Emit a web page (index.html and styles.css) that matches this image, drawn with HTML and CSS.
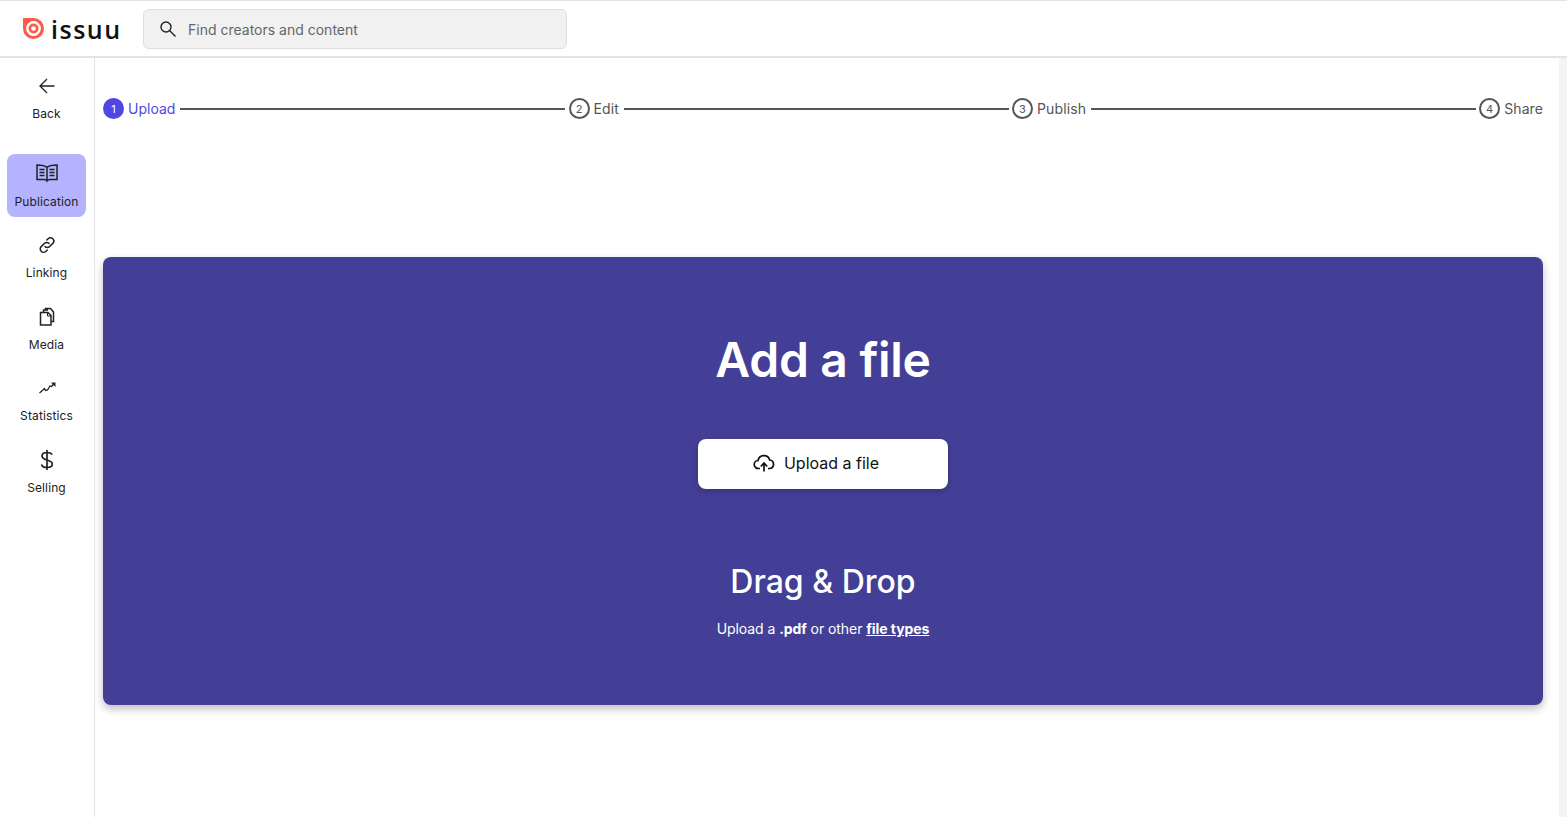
FILE: index.html
```html
<!DOCTYPE html>
<html lang="en">
<head>
<meta charset="utf-8">
<title>Upload a file</title>
<link rel="stylesheet" href="styles.css">
</head>
<body>
<header class="topbar">
  <a class="logo">
    <svg class="logo-mark" width="22" height="21" viewBox="0 0 22 21"><path d="M0 0h10.500a10.500 10.500 0 0 1 0 21a10.500 10.500 0 0 1-10.500-10.500z" fill="#ff5a47"/><circle cx="10.500" cy="10.500" r="6.200" fill="none" stroke="#fff" stroke-width="2.400"/><circle cx="10.500" cy="10.500" r="2.300" fill="#fff"/></svg>
    <span class="logo-text">issuu</span>
  </a>
  <div class="search">
    <svg width="18" height="18" viewBox="0 0 18 18" fill="none" stroke="#222" stroke-width="1.4"><circle cx="7" cy="7" r="5"/><path d="M10.800 10.800 16.500 16.500"/></svg>
    <span class="search-text">Find creators and content</span>
  </div>
</header>
<div class="shell">
  <nav class="sidebar">
    <a class="nav-item back">
      <svg viewBox="0 0 24 24" fill="none" stroke="#222" stroke-width="1.300"><path d="M19.500 12H5.500M12 5 5 12l7 7"/></svg>
      <span>Back</span>
    </a>
    <a class="nav-item active">
      <svg viewBox="0 0 24 24" fill="none" stroke="#222" stroke-width="1.500"><path d="M12 6.500C10.500 5 8 4 2 4v14.500h7c1.500 0 2.500.5 3 1.500.5-1 1.500-1.500 3-1.500h7V4c-6 0-8.500 1-10 2.500zM12 6.500v13"/><path d="M4.500 8.500h5M4.500 11.500h5M4.500 14.500h5M14.500 8.500h5M14.500 11.500h5M14.500 14.500h5" stroke-width="1.300"/></svg>
      <span>Publication</span>
    </a>
    <a class="nav-item">
      <svg viewBox="0 0 24 24" fill="none" stroke="#222" stroke-width="1.500" stroke-linecap="round"><path d="M10 13.500a3.300 3.300 0 0 0 4.700 0l3.100-3.100a3.300 3.300 0 0 0-4.700-4.700l-1.300 1.300"/><path d="M14 10.500a3.300 3.300 0 0 0-4.700 0l-3.100 3.100a3.300 3.300 0 0 0 4.700 4.700l1.300-1.300"/></svg>
      <span>Linking</span>
    </a>
    <a class="nav-item">
      <svg viewBox="0 0 24 24" fill="none" stroke="#222" stroke-width="1.500"><path d="M5.500 7.500h7.500l3 3v9.500H5.500z"/><path d="M8.500 7.500V5h4.500M10.500 5V3.500h5l3 3.500v9.500H16"/><path d="M12.500 7.500v3.500H16" stroke-width="1"/></svg>
      <span>Media</span>
    </a>
    <a class="nav-item">
      <svg viewBox="0 0 24 24" fill="none" stroke="#222" stroke-width="1.300"><path d="M4.500 17l5-4.500 1 2 2-.5 2.500-4 1.500.5 2-2.500"/><path d="M16 6.500h4.500V11z" fill="#222" stroke="none"/></svg>
      <span>Statistics</span>
    </a>
    <a class="nav-item">
      <svg viewBox="0 0 24 24" fill="none" stroke="#222" stroke-width="1.700"><path d="M12 2v20M17 6.800C16.500 5 14.500 4.500 12 4.500c-3 0-5 1.300-5 3.500 0 2.400 2.200 3.200 5 4 2.800.8 5.300 1.500 5.300 4 0 2.300-2.300 3.500-5.300 3.500-3 0-5-.8-5.500-3"/></svg>
      <span>Selling</span>
    </a>
  </nav>
  <main class="content">
    <ol class="stepper">
      <li class="step current"><span class="step-num">1</span><span>Upload</span></li>
      <li class="step-line"></li>
      <li class="step"><span class="step-num">2</span><span>Edit</span></li>
      <li class="step-line"></li>
      <li class="step"><span class="step-num">3</span><span>Publish</span></li>
      <li class="step-line"></li>
      <li class="step"><span class="step-num">4</span><span>Share</span></li>
    </ol>
    <section class="dropzone">
      <h1>Add a file</h1>
      <button class="upload-btn" type="button">
        <svg width="22" height="22" viewBox="0 0 22 22" fill="none" stroke="#111" stroke-width="1.700"><path d="M7 16.500H5.500a4 4 0 0 1-.5-8 6 6 0 0 1 11.700-.5 4.300 4.300 0 0 1 .3 8.500H15"/><path d="M11 19.500v-8M7.800 14.500 11 11l3.200 3.500"/></svg>
        <span>Upload a file</span>
      </button>
      <h2>Drag &amp; Drop</h2>
      <p>Upload a <b>.pdf</b> or other <a class="types"><b>file types</b></a></p>
    </section>
  </main>
  <div class="scrollbar"></div>
</div>
</body>
</html>
```
FILE: styles.css
```css
* { box-sizing: border-box; }
html, body { margin: 0; height: 100%; overflow: hidden; }
body { font-family: Inter, "Liberation Sans", sans-serif; background: #fff; color: #222; height: 817px; display: flex; flex-direction: column; }
.topbar { height: 58px; flex: none; border-top: 1px solid #e3e3e3; border-bottom: 2px solid #e3e3e3; display: flex; align-items: center; padding: 0 0 0 23px; }
.logo { display: flex; align-items: center; width: 120px; gap: 6px; }
.logo-mark { flex: none; }
.logo-text { font-family: "Open Sans", sans-serif; font-weight: 600; font-size: 25px; line-height: 30px; letter-spacing: 1.5px; color: #111; }
.search { width: 424px; height: 40px; background: #f1f1f1; border: 1px solid #ddd; border-radius: 6px; display: flex; align-items: center; gap: 11px; padding-left: 15px; font-size: 14px; color: #666; }
.search-text { padding-top: 2px; }
.shell { flex: 1; display: flex; min-height: 0; }
.sidebar { width: 95px; flex: none; border-right: 1px solid #e3e3e3; padding: 0 7px; display: flex; flex-direction: column; }
.nav-item { display: flex; flex-direction: column; align-items: center; width: 79px; height: 62.8px; margin-bottom: 9px; padding-top: 6px; border-radius: 8px; font-size: 12px; line-height: 16px; letter-spacing: .12px; color: #222; }
.nav-item svg { height: 24px; width: 24px; flex: none; margin-bottom: 8px; }
.nav-item.back { height: 63px; margin-top: 12px; margin-bottom: 21px; padding-top: 4px; }
.nav-item.active { height: 63px; margin-bottom: 9.8px; padding-top: 7px; background: #b3b3ff; }
.nav-item.active svg { margin-bottom: 9px; }
.content { flex: 1; min-width: 0; padding: 0 16px 0 8px; }
.stepper { list-style: none; margin: 0; padding: 40px 0 0; height: 199px; display: flex; align-items: flex-start; font-size: 14px; letter-spacing: .1px; color: #555; }
.step { display: flex; align-items: center; gap: 4px; height: 21px; }
.step-num { width: 21px; height: 21px; border-radius: 50%; border: 2px solid #555; display: flex; align-items: center; justify-content: center; font-size: 11px; }
.step.current { letter-spacing: 0; color: #4f46e5; }
.step.current .step-num { background: #4f46e5; border-color: #4f46e5; color: #fff; }
.step-line { flex: 1; height: 2px; margin: 10px 3.500px 0 5px; background: #555; }
.dropzone { height: 448px; background: #433f96; border-radius: 8px; box-shadow: 0 4px 8px rgba(0,0,0,.25); color: #fff; display: flex; flex-direction: column; align-items: center; }
.dropzone h1 { margin: 73px 0 0; font-size: 48px; line-height: 60px; font-weight: 600; letter-spacing: -.3px; }
.upload-btn { margin-top: 49px; width: 250px; height: 50px; border: 0; border-radius: 8px; padding: 0 14px 2px 0; background: #fff; box-shadow: 0 2px 6px rgba(0,0,0,.2); display: flex; align-items: center; justify-content: center; gap: 9px; font: 400 16px Inter, sans-serif; color: #111; }
.dropzone h2 { margin: 73px 0 0; font-size: 32px; line-height: 40px; font-weight: 500; }
.dropzone p { margin: 17px 0 0; font-size: 14px; line-height: 20px; letter-spacing: -.07px; }
.dropzone b { font-weight: 700; }
.types { text-decoration: underline; color: #fff; }
.scrollbar { width: 8px; flex: none; background: #f3f3f3; }
```
